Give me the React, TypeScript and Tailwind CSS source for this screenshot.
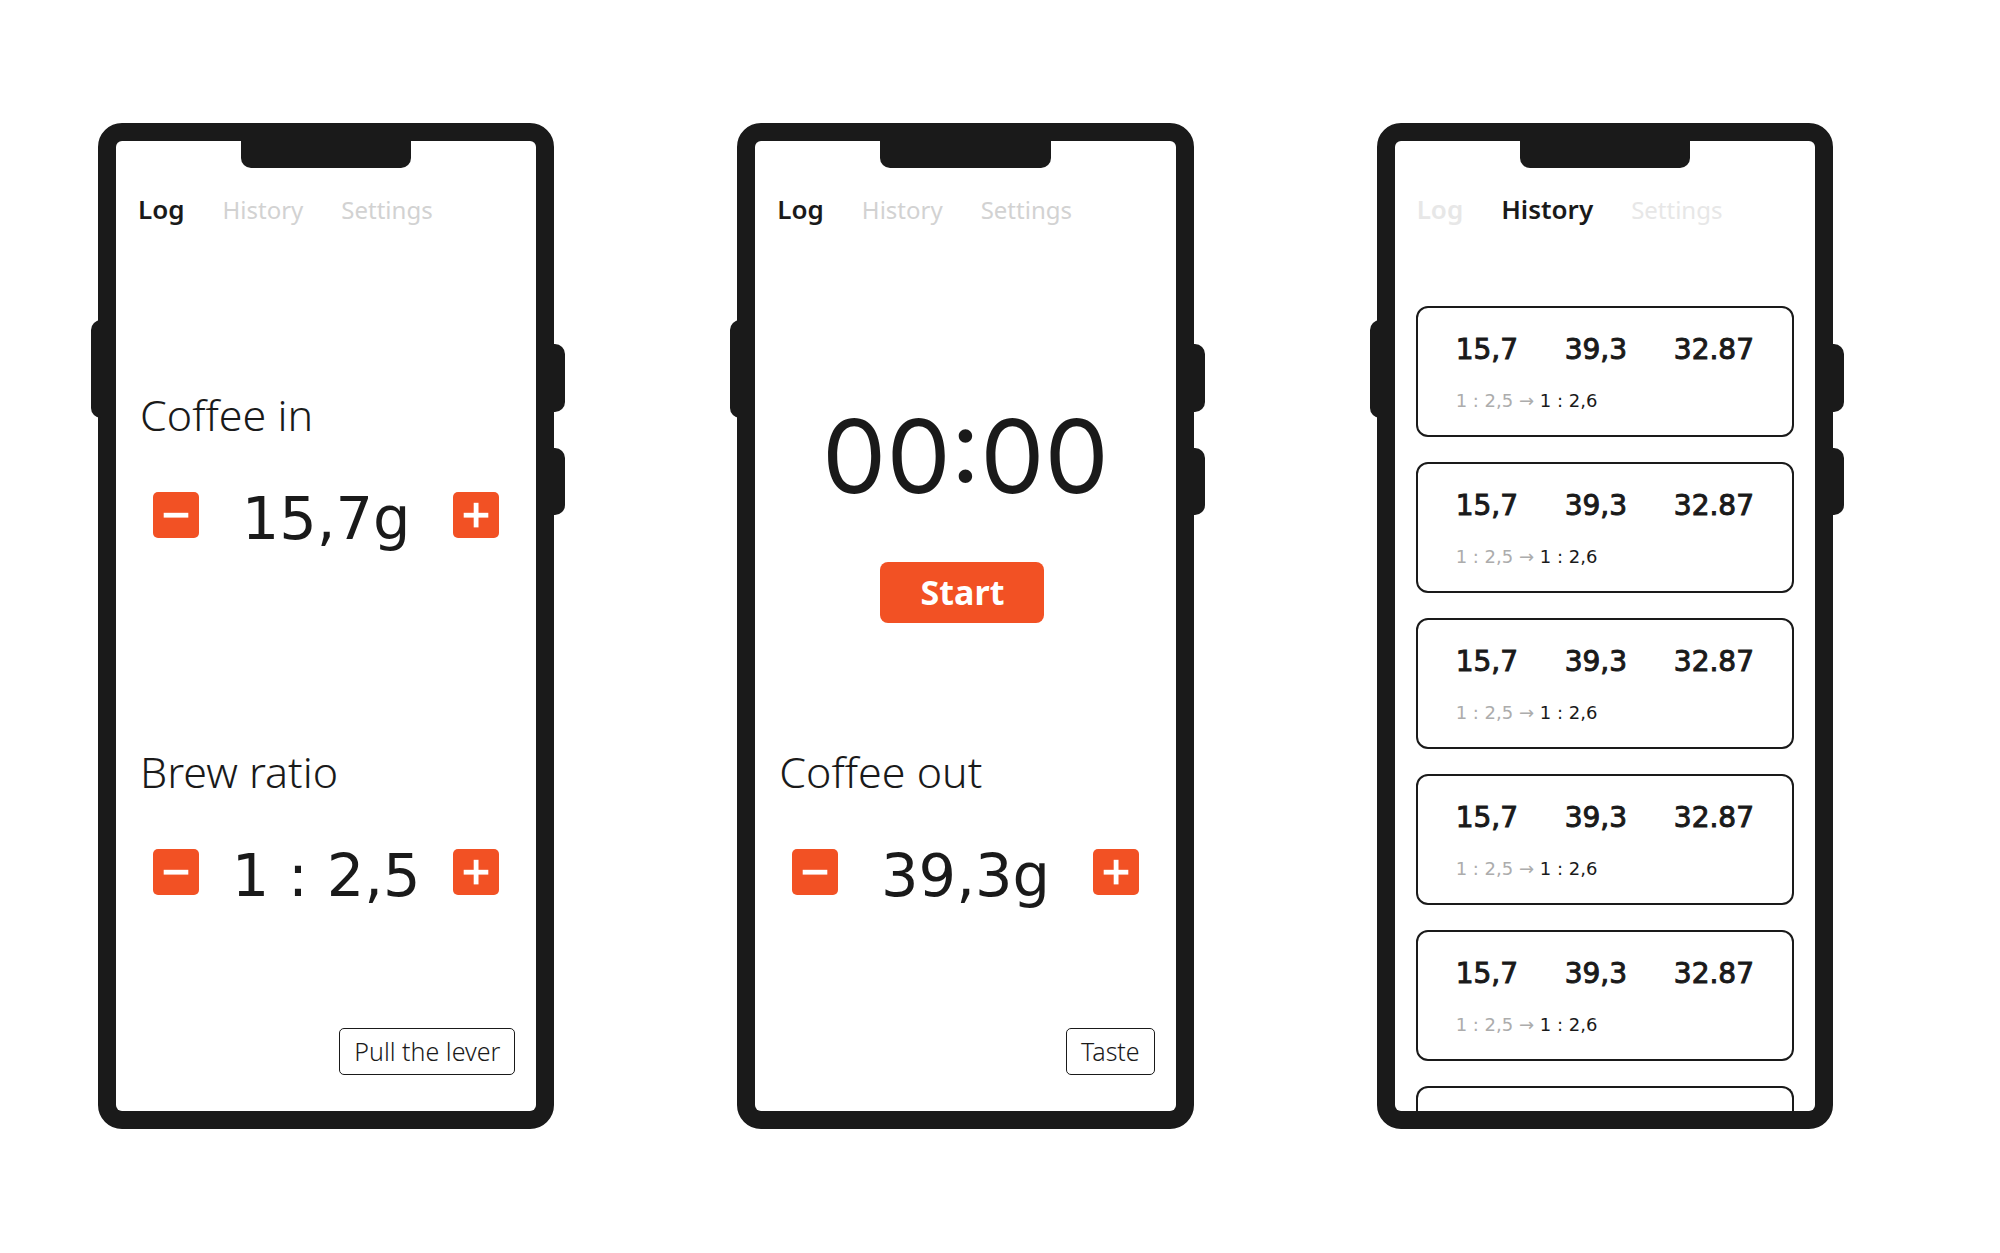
import type { ReactNode } from 'react';

type Tab = 'Log' | 'History' | 'Settings';

function Phone({ label, children }: { label: string; children: ReactNode }) {
  return (
    <section
      aria-label={label}
      className="relative h-[1006px] rounded-3xl border-[18px] border-[#1a1a1a] bg-[#1a1a1a]"
    >
      <span className="absolute -left-[25px] top-[179px] h-[98px] w-4 rounded-l-[10px] bg-[#1a1a1a]" />
      <span className="absolute -right-[29px] top-[203px] h-[68px] w-5 rounded-r-[10px] bg-[#1a1a1a]" />
      <span className="absolute -right-[29px] top-[307px] h-[67px] w-5 rounded-r-[10px] bg-[#1a1a1a]" />
      <span className="absolute inset-x-[125px] top-0 h-[27px] rounded-b-[10px] bg-[#1a1a1a]" />
      <div className="flex h-full flex-col overflow-hidden rounded-md bg-white pt-12">{children}</div>
    </section>
  );
}

function Nav({ active }: { active: Tab }) {
  const tabs: Tab[] = ['Log', 'History', 'Settings'];
  const idle = active === 'History' ? 'text-[#e7e7e7]' : 'text-[#d2d2d2]';
  return (
    <nav className="flex h-10 items-baseline gap-[38px] px-[22px] text-[24px] leading-10">
      {tabs.map((tab) => (
        <a
          key={tab}
          href={`#${tab.toLowerCase()}`}
          className={`${tab === active ? 'text-[#1a1a1a]' : idle} ${
            tab === active || tab === 'Log' ? 'text-[26px] font-semibold' : ''
          }`}
        >
          {tab}
        </a>
      ))}
    </nav>
  );
}

function StepButton({ kind, label }: { kind: 'plus' | 'minus'; label: string }) {
  return (
    <button
      type="button"
      aria-label={label}
      className="flex size-[46px] items-center justify-center rounded-[5px] bg-[#f25124] text-white"
    >
      <svg viewBox="0 0 46 46" className="size-full" fill="currentColor" aria-hidden="true">
        <rect x="10.7" y="20.8" width="24.6" height="4.8" />
        {kind === 'plus' && <rect x="20.7" y="10.8" width="4.8" height="24.6" />}
      </svg>
    </button>
  );
}

function Stepper({ title, value }: { title: string; value: string }) {
  return (
    <div>
      <h2 className="px-6 text-[43px] font-light leading-[60px] [font-variant-ligatures:none]">{title}</h2>
      <div className="mt-[30px] flex h-20 items-center justify-between px-[37px]">
        <StepButton kind="minus" label={`Decrease ${title}`} />
        <output className="pt-2 font-['DejaVu_Sans',sans-serif] text-[59px] leading-[72px]">{value}</output>
        <StepButton kind="plus" label={`Increase ${title}`} />
      </div>
    </div>
  );
}

function NextButton({ children }: { children: ReactNode }) {
  return (
    <button
      type="button"
      className="mr-[21px] mt-auto mb-9 flex h-[47px] items-center self-end rounded-[5px] border border-[#1a1a1a] px-[14px] text-[25px] font-light"
    >
      {children}
    </button>
  );
}

function BrewCard() {
  return (
    <li className="h-[131px] shrink-0 rounded-xl border-2 border-[#1a1a1a] px-[38px] pt-5 font-['DejaVu_Sans',sans-serif]">
      <div className="flex justify-between text-[28px] leading-[44px] [-webkit-text-stroke-width:1px]">
        <span>15,7</span>
        <span>39,3</span>
        <span>32.87</span>
      </div>
      <p className="mt-[14px] text-[18px] leading-[30px]">
        <span className="text-[#acacac]">1 : 2,5 →</span> <span>1 : 2,6</span>
      </p>
    </li>
  );
}

export default function App() {
  return (
    <main className="grid min-h-screen grid-cols-3 content-start gap-x-[183px] bg-white pb-10 pl-[98px] pr-[167px] pt-[123px] font-['Noto_Sans',sans-serif] text-[#1a1a1a]">
      <Phone label="Log coffee">
        <Nav active="Log" />
        <div className="mt-[156px]">
          <Stepper title="Coffee in" value="15,7g" />
        </div>
        <div className="mt-[187px]">
          <Stepper title="Brew ratio" value="1 : 2,5" />
        </div>
        <NextButton>Pull the lever</NextButton>
      </Phone>

      <Phone label="Brew timer">
        <Nav active="Log" />
        <div className="mt-[167px] flex flex-col items-center">
          <time className="font-['Inter',sans-serif] text-[102px] leading-[120px]">00:00</time>
          <button
            type="button"
            className="mr-1.5 mt-[46px] h-[61px] w-[164px] rounded-lg bg-[#f25124] text-[34px] font-bold text-white"
          >
            Start
          </button>
        </div>
        <div className="mt-[119px]">
          <Stepper title="Coffee out" value="39,3g" />
        </div>
        <NextButton>Taste</NextButton>
      </Phone>

      <Phone label="Brew history">
        <Nav active="History" />
        <ul className="mt-[77px] flex min-h-0 flex-1 flex-col gap-[25px] overflow-hidden px-[21px]">
          {[1, 2, 3, 4, 5].map((id) => (
            <BrewCard key={id} />
          ))}
          <li className="flex-1 rounded-t-xl border-2 border-b-0 border-[#1a1a1a]" />
        </ul>
      </Phone>
    </main>
  );
}
